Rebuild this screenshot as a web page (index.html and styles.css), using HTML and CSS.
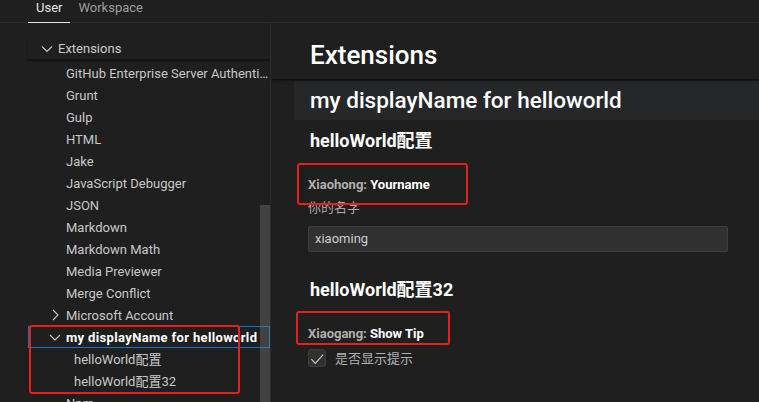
FILE: index.html
```html
<!DOCTYPE html>
<html>
<head>
<meta charset="utf-8">
<link rel="stylesheet" href="styles.css">
</head>
<body>
<div class="tabs">
  <div class="tab active">User</div>
  <div class="tab">Workspace</div>
</div>
<div class="main">
  <div class="tree">
    <div class="tree-head">
      <svg class="chev" viewBox="0 0 16 16"><path d="M3 6.5 L8 11.5 L13 6.5"/></svg>
      <span>Extensions</span>
    </div>
    <div class="rows">
      <div class="row">GitHub Enterprise Server Authentication</div>
      <div class="row">Grunt</div>
      <div class="row">Gulp</div>
      <div class="row">HTML</div>
      <div class="row">Jake</div>
      <div class="row">JavaScript Debugger</div>
      <div class="row">JSON</div>
      <div class="row">Markdown</div>
      <div class="row">Markdown Math</div>
      <div class="row">Media Previewer</div>
      <div class="row">Merge Conflict</div>
      <div class="row has-chev"><svg class="chev" viewBox="0 0 16 16"><path d="M6 3 L11 8 L6 13"/></svg><span class="lbl">Microsoft Account</span></div>
      <div class="row has-chev selected"><svg class="chev" viewBox="0 0 16 16"><path d="M3 6 L8 11 L13 6"/></svg><span class="lbl">my displayName for helloworld</span></div>
      <div class="row child">helloWorld配置</div>
      <div class="row child">helloWorld配置32</div>
      <div class="row">Npm</div>
    </div>
    <div class="scrollbar"></div>
  </div>
  <div class="divider"></div>
  <div class="content">
    <div class="content-head"><h1>Extensions</h1></div>
    <div class="section-title">my displayName for helloworld</div>
    <div class="group">
      <h3>helloWorld配置</h3>
      <div class="setting-label"><span class="cat">Xiaohong: </span><span class="name">Yourname</span></div>
      <div class="desc">你的名字</div>
      <div class="input">xiaoming</div>
      <h3 class="second">helloWorld配置32</h3>
      <div class="setting-label"><span class="cat">Xiaogang: </span><span class="name">Show Tip</span></div>
      <div class="check-row">
        <div class="checkbox"><svg viewBox="0 0 18 18"><path d="M2.7 10.3 L7 15 L16 5.3"/></svg></div>
        <span class="check-text">是否显示提示</span>
      </div>
    </div>
  </div>
</div>
<div class="annot annot-left"></div>
<div class="annot annot-r1"></div>
<div class="annot annot-r2"></div>
</body>
</html>
```
FILE: styles.css
```css
* { box-sizing: border-box; }
html, body {
  margin: 0;
  padding: 0;
  width: 759px;
  height: 402px;
  overflow: hidden;
  background: #1f1f1f;
  font-family: Roboto, "Noto Sans CJK SC", sans-serif;
  color: #cccccc;
  font-size: 13px;
}
body { position: relative; }

.tabs {
  display: flex;
  height: 23px;
  padding-left: 28px;
  border-bottom: 1px solid #2b2b2b;
}
.tab {
  padding: 0 8px;
  line-height: 16px;
  height: 23px;
  color: #9d9d9d;
  font-size: 13px;
}
.tab.active {
  color: #e7e7e7;
  border-bottom: 1px solid #e7e7e7;
}

.main {
  display: flex;
  height: 379px;
}
.tree {
  position: relative;
  width: 270px;
  padding-top: 14px;
  overflow: hidden;
}
.tree-head {
  display: flex;
  align-items: center;
  gap: 3px;
  height: 22px;
  margin-left: 28px;
  padding-left: 11px;
  box-shadow: 0 2px 2px rgba(0, 0, 0, 0.45);
  color: #cccccc;
}
.chev {
  width: 16px;
  height: 16px;
  flex: none;
}
.chev path {
  fill: none;
  stroke: #c5c5c5;
  stroke-width: 1.1;
}
.rows {
  margin-top: 3px;
  margin-left: 28px;
}
.row {
  height: 22px;
  line-height: 24px;
  padding-left: 38px;
  white-space: nowrap;
  overflow: hidden;
  text-overflow: ellipsis;
  color: #c8c8c8;
}
.row.has-chev {
  display: flex;
  align-items: center;
  gap: 3px;
  padding-left: 19px;
}
.lbl {
  overflow: hidden;
  text-overflow: ellipsis;
  line-height: 22px;
  padding-top: 1px;
}
.row.child { padding-left: 46px; }
.row.selected {
  outline: 1px solid #0078d4;
  outline-offset: -1px;
  color: #ffffff;
  font-weight: 700;
  letter-spacing: 0.35px;
}
.scrollbar {
  position: absolute;
  left: 260px;
  top: 182px;
  width: 10px;
  height: 200px;
  background: rgba(121, 121, 121, 0.4);
}
.divider {
  width: 1px;
  background: #2b2b2b;
  flex: none;
}

.content {
  flex: 1;
  overflow: hidden;
}
.content-head {
  padding: 16px 0 7px 39px;
  height: 56px;
  box-shadow: 0 1px 3px rgba(0, 0, 0, 0.7);
  position: relative;
}
h1 {
  margin: 0;
  font-size: 26px;
  line-height: 32px;
  font-weight: 500;
  color: #ffffff;
}
.section-title {
  margin-top: 2px;
  margin-left: 23px;
  height: 39px;
  line-height: 39px;
  padding-left: 16px;
  background: #262729;
  font-size: 22.5px;
  font-weight: 500;
  color: #ffffff;
}
.group {
  padding-left: 37px;
}
h3 {
  margin: 9px 0 0 2px;
  font-size: 18px;
  line-height: 24px;
  font-weight: 700;
  color: #ffffff;
}
h3.second { margin-top: 26px; }
.setting-label {
  margin-top: 23px;
  line-height: 18px;
  font-weight: 700;
  font-size: 13px;
}
.cat { color: #b0b0b0; }
.name { color: #ffffff; }
.desc {
  margin-top: 5px;
  line-height: 18px;
  color: #a8a8a8;
}
.input {
  margin-top: 9px;
  width: 420px;
  height: 26px;
  line-height: 24px;
  padding-left: 6px;
  background: #313131;
  border: 1px solid #3c3c3c;
  border-radius: 2px;
  color: #cccccc;
}
.check-row {
  display: flex;
  align-items: center;
  gap: 9px;
  margin-top: 5px;
}
.checkbox {
  width: 18px;
  height: 18px;
  background: #313131;
  border: 1px solid #3c3c3c;
  border-radius: 3px;
  flex: none;
}
.checkbox svg {
  width: 16px;
  height: 16px;
  display: block;
}
.checkbox path {
  fill: none;
  stroke: #cccccc;
  stroke-width: 1.3;
}
.check-text { color: #b0b0b0; }

.annot {
  position: absolute;
  border: 2px solid #e8201a;
  border-radius: 3px;
}
.annot-left { left: 29px; top: 325px; width: 211px; height: 69px; }
.annot-r1 { left: 297px; top: 163px; width: 171px; height: 42px; }
.annot-r2 { left: 296px; top: 311px; width: 154px; height: 34px; }
```
